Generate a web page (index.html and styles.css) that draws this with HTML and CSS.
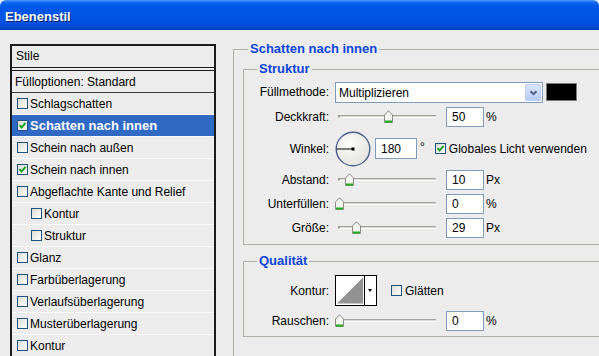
FILE: index.html
```html
<!DOCTYPE html>
<html>
	<head>
		<meta charset="utf-8">
		<title>Ebenenstil</title>
		<link rel="stylesheet" href="styles.css">
	</head>
	<body>
		<div class="titlebar">Ebenenstil</div>
		<div class="main">
			<!-- Liste der Stile -->
			<div class="styles">
				<div class="head">Stile</div>
				<div class="item opt">Fülloptionen: Standard</div>
				<div class="item"><span class="cb"></span>Schlagschatten</div>
				<div class="item sel"><span class="cb"><svg viewBox="0 0 9 9"><path d="M1.5 4.2 L3.6 6.5 L7.6 1.8"/></svg></span>Schatten nach innen</div>
				<div class="item"><span class="cb"></span>Schein nach außen</div>
				<div class="item"><span class="cb"><svg viewBox="0 0 9 9"><path d="M1.5 4.2 L3.6 6.5 L7.6 1.8"/></svg></span>Schein nach innen</div>
				<div class="item"><span class="cb"></span>Abgeflachte Kante und Relief</div>
				<div class="item sub"><span class="cb"></span>Kontur</div>
				<div class="item sub"><span class="cb"></span>Struktur</div>
				<div class="item"><span class="cb"></span>Glanz</div>
				<div class="item"><span class="cb"></span>Farbüberlagerung</div>
				<div class="item"><span class="cb"></span>Verlaufsüberlagerung</div>
				<div class="item"><span class="cb"></span>Musterüberlagerung</div>
				<div class="item"><span class="cb"></span>Kontur</div>
			</div>

			<!-- Einstellungen -->
			<div class="right">
				<fieldset class="group outer">
					<legend>Schatten nach innen</legend>

					<fieldset class="group inner">
						<legend>Struktur</legend>
						<div class="row r-fill">
							<label>Füllmethode:</label>
							<div class="select">
								<span>Multiplizieren</span>
								<span class="dd"><svg viewBox="0 0 9 6"><path d="M1.5 1.2 L4.5 4.2 L7.5 1.2"/></svg></span>
							</div>
							<div class="color"></div>
						</div>
						<div class="row r-deck">
							<label>Deckkraft:</label>
							<div class="slider"><div class="track"></div><div class="thumb" style="left:49px"><svg viewBox="0 0 9 13"><path class="tb" d="M0.5 12.5 V5 L4.5 0.8 L8.5 5 V12.5 Z"/><path class="tg" d="M1 10.5 H8 V12.5 H1 Z"/></svg></div></div>
							<input class="num" type="text" value="50">
							<span class="unit">%</span>
						</div>
						<div class="row r-angle">
							<label>Winkel:</label>
							<div class="dial">
								<svg viewBox="0 0 36 36">
									<defs><radialGradient id="dg" cx="40%" cy="35%" r="70%"><stop offset="0" stop-color="#fbfbfa"/><stop offset="1" stop-color="#e2e2de"/></radialGradient></defs>
									<circle cx="18" cy="18" r="16.8" fill="url(#dg)" stroke="#4b5f8e" stroke-width="1.4"/>
									<line x1="1.5" y1="18" x2="18" y2="18" stroke="#000" stroke-width="1"/>
									<rect x="16.5" y="16.5" width="3" height="3" fill="#000"/>
								</svg>
							</div>
							<input class="num deg" type="text" value="180">
							<span class="grad">°</span>
							<span class="cb"><svg viewBox="0 0 9 9"><path d="M1.5 4.2 L3.6 6.5 L7.6 1.8"/></svg></span>
							<span class="cbtext">Globales Licht verwenden</span>
						</div>
						<div class="row r-std">
							<label>Abstand:</label>
							<div class="slider"><div class="track"></div><div class="thumb" style="left:10px"><svg viewBox="0 0 9 13"><path class="tb" d="M0.5 12.5 V5 L4.5 0.8 L8.5 5 V12.5 Z"/><path class="tg" d="M1 10.5 H8 V12.5 H1 Z"/></svg></div></div>
							<input class="num" type="text" value="10">
							<span class="unit">Px</span>
						</div>
						<div class="row r-std">
							<label>Unterfüllen:</label>
							<div class="slider"><div class="track"></div><div class="thumb" style="left:0px"><svg viewBox="0 0 9 13"><path class="tb" d="M0.5 12.5 V5 L4.5 0.8 L8.5 5 V12.5 Z"/><path class="tg" d="M1 10.5 H8 V12.5 H1 Z"/></svg></div></div>
							<input class="num" type="text" value="0">
							<span class="unit">%</span>
						</div>
						<div class="row r-std">
							<label>Größe:</label>
							<div class="slider"><div class="track"></div><div class="thumb" style="left:17px"><svg viewBox="0 0 9 13"><path class="tb" d="M0.5 12.5 V5 L4.5 0.8 L8.5 5 V12.5 Z"/><path class="tg" d="M1 10.5 H8 V12.5 H1 Z"/></svg></div></div>
							<input class="num" type="text" value="29">
							<span class="unit">Px</span>
						</div>
					</fieldset>

					<fieldset class="group inner quality">
						<legend>Qualität</legend>
						<div class="row r-kontur">
							<label>Kontur:</label>
							<div class="curve">
								<svg class="prev" viewBox="0 0 29 29"><rect width="29" height="29" fill="#fff"/><polygon points="1,28 28,1 28,28" fill="#929292"/></svg>
								<span class="arrow"></span>
							</div>
							<span class="cb"></span>
							<span class="cbtext">Glätten</span>
						</div>
						<div class="row r-rausch">
							<label>Rauschen:</label>
							<div class="slider"><div class="track"></div><div class="thumb" style="left:0px"><svg viewBox="0 0 9 13"><path class="tb" d="M0.5 12.5 V5 L4.5 0.8 L8.5 5 V12.5 Z"/><path class="tg" d="M1 10.5 H8 V12.5 H1 Z"/></svg></div></div>
							<input class="num" type="text" value="0">
							<span class="unit">%</span>
						</div>
					</fieldset>
				</fieldset>
			</div>
		</div>
	</body>
</html>
```

FILE: styles.css
```css
*{
	margin: 0;padding: 0;
	box-sizing: border-box;
}
html,body{
	width: 599px;
	height: 356px;
	overflow: hidden;
}
body{
	background: #ececec;
	font-family: "Liberation Sans", Arial, sans-serif;
	font-size: 12px;
	color: #000;
}
.titlebar{
	height: 30px;
	padding: 3px 0 0 5px;
	line-height: 27px;
	color: #fff;
	font-size: 13px;
	font-weight: bold;
	text-shadow: 1px 1px 0 #0b1c66;
	border-radius: 6px 6px 0 0;
	background: linear-gradient(#4a98fa 0, #0d63f1 3px, #0057e8 7px, #0054e3 22px, #004ad4 27px, #003db4 30px);
}
.main{
	display: flex;
	align-items: flex-start;
	padding-left: 10px;
	height: 326px;
	overflow: hidden;
}

/* Liste links */
.styles{
	flex: none;
	width: 206px;
	height: 320px;
	margin-top: 14px;
	border: 2px solid #1b1b1b;
	border-bottom: none;
}
.head{
	height: 25px;
	line-height: 21px;
	padding-left: 4px;
	border-bottom: 4px double #1b1b1b;
}
.item{
	display: flex;
	align-items: center;
	height: 22px;
	padding-left: 5px;
	border-bottom: 1px solid #fafafa;
}
.item.opt{
	padding-left: 3px;
	border-bottom-color: #3c3c3c;
}
.item.sub{
	padding-left: 19px;
}
.item.sel{
	background: #316ac5;
	color: #fff;
	font-size: 13px;
	font-weight: bold;
}
.cb{
	display: inline-flex;
	align-items: center;
	justify-content: center;
	width: 11px;
	height: 11px;
	margin-right: 2px;
	border: 1px solid #1c5180;
	background: linear-gradient(135deg, #dcdcd6, #fff);
	flex: none;
}
.cb svg{
	width: 9px;
	height: 9px;
}
.cb path{
	fill: none;
	stroke: #21a121;
	stroke-width: 2;
}

/* Gruppen rechts */
.right{
	flex: none;
	margin-top: 11px;
	margin-left: 17px;
	width: 420px;
}
.group{
	border: 1px solid #b0aea6;
	min-width: 0;
}
.group legend{
	margin-left: 5px;
	padding: 0 2px;
	line-height: 16px;
	font-size: 13px;
	font-weight: bold;
	color: #0d45d9;
}
.outer{
	padding: 4px 0 60px 9px;
	border-right: none;
}
.inner{
	padding: 5px 0 4px 0;
	border-right: none;
}
.inner legend{
	margin-left: 13px;
}
.quality{
	margin-top: 8px;
	padding-bottom: 1px;
}
.row{
	display: flex;
	align-items: center;
	height: 24px;
}
.row label{
	width: 85px;
	margin-right: 6px;
	text-align: right;
	flex: none;
}
.r-fill{ height: 22px; align-items: flex-start; }
.r-fill label{ line-height: 21px; }
.r-deck{ height: 25px; }
.r-angle{ height: 39px; }
.r-kontur{ height: 33px; }
.r-rausch{ height: 28px; }

.select{
	display: flex;
	align-items: center;
	justify-content: space-between;
	width: 208px;
	height: 21px;
	padding: 0 1px 0 3px;
	background: #fff;
	border: 1px solid #7f9db9;
}
.dd{
	display: flex;
	align-items: center;
	justify-content: center;
	width: 16px;
	height: 17px;
	border: 1px solid #b9cbf3;
	border-radius: 2px;
	background: linear-gradient(#dbe5fc, #b8cbf5);
}
.dd svg{
	width: 9px;
	height: 6px;
}
.dd path{
	fill: none;
	stroke: #4d6185;
	stroke-width: 2;
}
.color{
	width: 31px;
	height: 18px;
	margin: 1px 0 0 3px;
	background: #000;
	border: 1px solid #7c7c7c;
}

.slider{
	position: relative;
	width: 105px;
	height: 14px;
}
.track{
	position: absolute;
	left: 3px;
	right: 4px;
	top: 5px;
	height: 3px;
	background: #d8d8d2;
	border-top: 1px solid #a2a19b;
	border-bottom: 1px solid #fff;
	border-left: 2px solid #9a9994;
}
.thumb{
	position: absolute;
	top: 0;
	width: 9px;
	height: 13px;
}
.thumb svg{
	display: block;
	width: 9px;
	height: 13px;
}
.thumb .tb{
	fill: #f3f3ef;
	stroke: #8d8c87;
	stroke-width: 1;
}
.thumb .tg{
	fill: #1fae1f;
}
.num{
	width: 38px;
	height: 20px;
	margin-left: 6px;
	padding-left: 5px;
	border: 1px solid #7f9db9;
	background: #fff;
	font-family: "Liberation Sans", Arial, sans-serif;
	font-size: 12px;
	color: #000;
	outline: none;
}
.unit{
	margin-left: 2px;
}
.dial{
	width: 36px;
	height: 36px;
}
.dial svg{
	display: block;
	width: 36px;
	height: 36px;
}
.num.deg{
	width: 42px;
	height: 21px;
	margin-left: 4px;
}
.grad{
	margin-left: 3px;
	margin-right: 10px;
	margin-top: -4px;
}
.cbtext{
	margin-left: 1px;
}
.curve{
	display: flex;
	width: 42px;
	height: 31px;
	border: 1px solid #000;
	background: #fff;
}
.curve .prev{
	display: block;
	width: 29px;
	height: 29px;
	border-right: 1px solid #000;
}
.curve .arrow{
	flex: 1;
	position: relative;
}
.curve .arrow:after{
	content: "";
	position: absolute;
	left: 3px;
	top: 13px;
	border-left: 2.5px solid transparent;
	border-right: 2.5px solid transparent;
	border-top: 3px solid #000;
}
.r-kontur .cb{
	margin-left: 14px;
}
```
